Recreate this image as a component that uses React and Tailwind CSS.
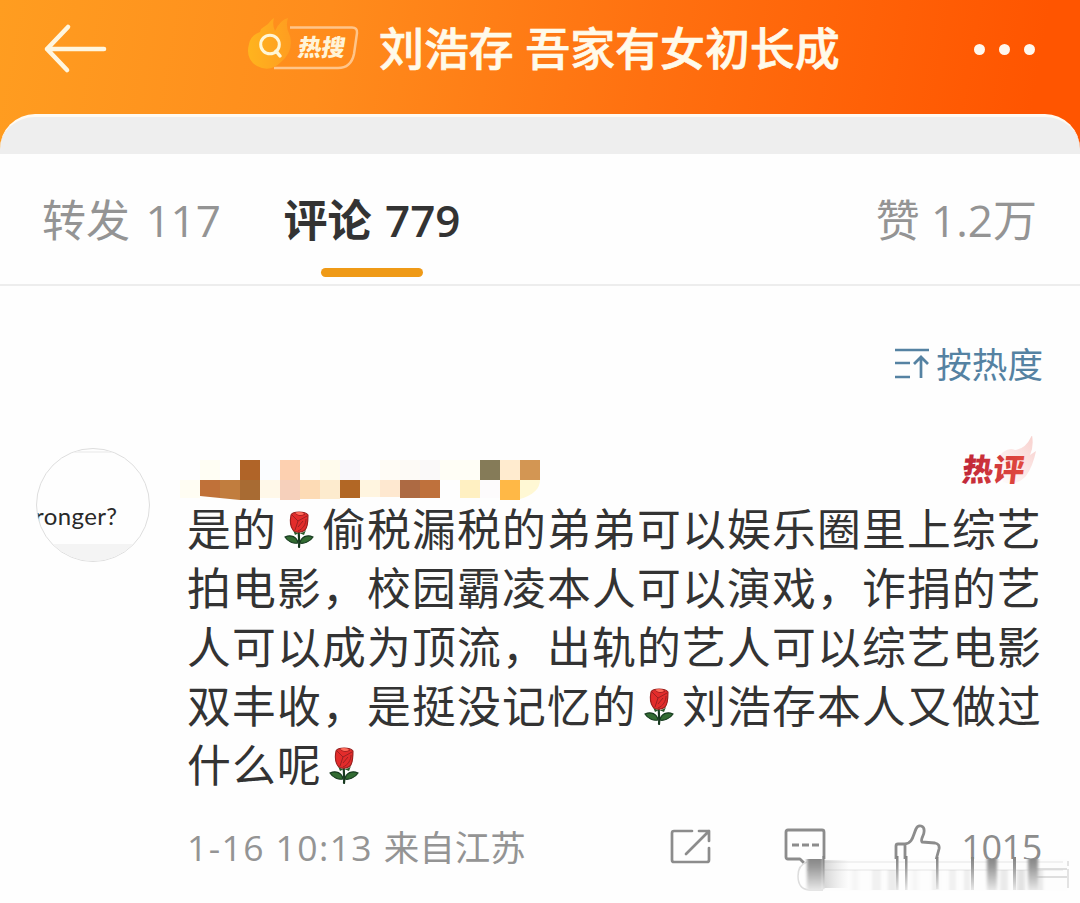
import React from 'react';

const commentLines = [
  '是的🌹偷税漏税的弟弟可以娱乐圈里上综艺',
  '拍电影，校园霸凌本人可以演戏，诈捐的艺',
  '人可以成为顶流，出轨的艺人可以综艺电影',
  '双丰收，是挺没记忆的🌹刘浩存本人又做过',
  '什么呢🌹',
];

// [x, y, width, height, colour] of every block in the hidden nickname
const mosaic = [
  [20, 0, 20, 20, '#fffef4'],
  [60, 0, 20, 20, '#b06428'],
  [80, 0, 20, 20, '#fbfdff'],
  [100, 0, 20, 20, '#fdd0b0'],
  [120, 0, 20, 20, '#fffdf9'],
  [140, 0, 20, 20, '#fffbed'],
  [160, 0, 20, 20, '#f9f7fa'],
  [200, 0, 20, 20, '#fffcf6'],
  [220, 0, 20, 20, '#fdfaf6'],
  [240, 0, 20, 20, '#faf9f9'],
  [260, 0, 40, 20, '#fffef6'],
  [300, 0, 20, 20, '#857b58'],
  [320, 0, 20, 20, '#ffebcf'],
  [340, 0, 20, 20, '#d39653'],
  [0, 20, 20, 18, '#fffdf3'],
  [60, 20, 20, 20, '#a86b33'],
  [80, 20, 20, 18, '#fff8e9'],
  [100, 20, 20, 20, '#f6d0bb'],
  [120, 20, 20, 19, '#fddbb5'],
  [140, 20, 20, 19, '#fdebce'],
  [160, 20, 20, 18, '#b26725'],
  [180, 20, 20, 17, '#fff5e0'],
  [200, 20, 20, 17, '#fee8d0'],
  [220, 20, 20, 18, '#ad6a43'],
  [240, 20, 20, 18, '#bf713c'],
  [280, 20, 20, 18, '#fff0c2'],
  [300, 20, 20, 18, '#fdfbfc'],
  [320, 20, 20, 20, '#ffb846'],
];

// [x, width, opacity] of the vertical streaks in the watermark
const streaks = [
  [55, 6, 0.05],
  [75, 9, 0.09],
  [91, 9, 0.12],
  [115, 6, 0.06],
  [135, 7, 0.09],
  [152, 7, 0.09],
  [167, 6, 0.11],
  [190, 9, 0.13],
  [203, 8, 0.14],
  [220, 8, 0.2],
  [238, 8, 0.15],
];

const Rose = () => (
  <svg className="inline-block w-[45px] h-[40px] -mt-[8px] align-middle" viewBox="0 0 45 40">
    <path d="M22 19C21 26 23 31 22 37" fill="none" stroke="#17391f" strokeWidth="2.2" strokeLinecap="round" />
    <path d="M21 33C17 34 11 32 8 27C14 24 20 27 21 33Z" fill="#326b32" stroke="#173b20" strokeWidth="1.2" />
    <path d="M23 33C26 34 33 32 36 27C30 24 24 27 23 33Z" fill="#326b32" stroke="#173b20" strokeWidth="1.2" />
    <path d="M16 20C19 24 26 24 29 20L27 25L22 23L18 25Z" fill="#285a2b" />
    <path d="M14 5C16 1 28 1 31 5C31 11 31 17 28 20C25 23 18 23 16 20C13 16 13 10 14 5Z" fill="#e32c2b" stroke="#96201f" strokeWidth="1.1" />
    <path d="M15 5L21 11L30 6M21 11L18 20M18 3C21 6 25 6 28 4M26 11L21 17M29 9C29 14 26 19 21 21" fill="none" stroke="#9c2022" strokeWidth="1" />
    <path d="M18 3C21 1 26 2 27 4C24 6 21 5 18 3Z" fill="#ff6a59" />
  </svg>
);

const HotSearchBadge = () => (
  <svg className="w-[112px] h-[54px] shrink-0" viewBox="0 0 112 54">
    <path d="M42 9.500H104Q109.500 9.500 109 15L106 36Q103 50 90 50H26" fill="none" stroke="#ffc58a" strokeWidth="2.500" />
    <path d="M13 11L20 6Q24 1 26 0Q24 7 27 13Q32 2 40 0Q37 9 42 18Q46 33 33 44Q22 55 9 48Q-3 41 1 26Q3 17 12 14Z" fill="url(#flame)" />
    <circle cx="22" cy="26.500" r="9.300" fill="none" stroke="#fff6d5" strokeWidth="3" />
    <path d="M28 33L32 38" stroke="#fff6d5" strokeWidth="3.500" strokeLinecap="round" />
    <text x="0" y="0" transform="translate(49 38) skewX(-9)" fontFamily="Noto Sans CJK SC, sans-serif" fontSize="23.500" fontWeight="900" fill="#fff4d8">热搜</text>
    <defs>
      <linearGradient id="flame" x1="0" y1="0" x2="1" y2="0">
        <stop offset="0" stopColor="#ffb41e" />
        <stop offset="1" stopColor="#ff9d20" />
      </linearGradient>
    </defs>
  </svg>
);

const HotCommentBadge = () => (
  <svg className="w-[80px] h-[58px]" viewBox="0 0 80 58">
    <path d="M36 24Q46 10 55 14Q66 13 72 -1Q74 11 70 19L76 15Q73 30 66 40Q56 51 43 46Z" fill="url(#glow)" />
    <text transform="translate(1 45) skewX(-7)" fontFamily="Noto Sans CJK SC, sans-serif" fontSize="31" fontWeight="900" fill="url(#red)">热评</text>
    <defs>
      <linearGradient id="glow" x1="0" y1="1" x2="1" y2="0">
        <stop offset="0" stopColor="#fff" />
        <stop offset="1" stopColor="#f8cfcc" />
      </linearGradient>
      <linearGradient id="red" x1="0" y1="0" x2="1" y2="0">
        <stop offset="0" stopColor="#bf2639" />
        <stop offset="1" stopColor="#e24a3e" />
      </linearGradient>
    </defs>
  </svg>
);

const Header = () => (
  <header className="h-[154px] flex flex-col justify-between bg-[linear-gradient(100deg,#ff9d20_0%,#ff8c1c_30%,#ff7010_60%,#ff5500_95%)]">
    <div className="h-[98px] flex items-center">
      <svg className="w-[64px] h-[52px] ml-[43px] shrink-0" viewBox="0 0 64 52">
        <path d="M25 4L4 26L24 47M4 26H61" fill="none" stroke="#fff6df" strokeWidth="4.6" strokeLinecap="round" strokeLinejoin="round" />
      </svg>
      <div className="ml-[141px] -mt-[8px] flex"><HotSearchBadge /></div>
      <h1 className="ml-[19px] w-[480px] text-[44.9px] leading-[60px] font-medium text-[#fffaea] whitespace-nowrap [-webkit-text-stroke:0.7px_#fffaea]">刘浩存 吾家有女初长成</h1>
      <div className="ml-[115px] flex gap-[14px]">
        <i className="size-[11px] rounded-full bg-[#fff7ee]" />
        <i className="size-[11px] rounded-full bg-[#fff7ee]" />
        <i className="size-[11px] rounded-full bg-[#fff7ee]" />
      </div>
    </div>
    <div className="h-[40px] rounded-t-[35px] border-t-[3px] border-[#fffaf2] bg-[#eee]" />
  </header>
);

const Tabs = () => (
  <nav className="h-[132px] flex items-start pt-[36px] pl-[42px] pr-[43px] border-b-2 border-[#ededed] text-[44px] leading-[60px] text-[#949494] whitespace-nowrap">
    <span className="w-[240px]">转发<span className="ml-[4px]"> 117</span></span>
    <div className="w-[180px] flex flex-col items-center">
      <span className="font-semibold text-[#333]">评论<span className="ml-[2px]"> 779</span></span>
      <i className="mt-[18px] h-[9px] w-[102px] rounded-full bg-[#ef9a17]" />
    </div>
    <span className="ml-auto">赞 1.2万</span>
  </nav>
);

const Watermark = () => (
  <svg className="absolute left-[797px] top-[856px] w-[275px] h-[38px]" viewBox="0 0 275 38">
    <defs>
      <linearGradient id="smear" gradientUnits="userSpaceOnUse" x1="0" y1="0" x2="0" y2="36">
        <stop offset="0" stopColor="#808080" />
        <stop offset="0.3" stopColor="#999" />
        <stop offset="1" stopColor="#eee" />
      </linearGradient>
      <linearGradient id="fade" x1="0" y1="0" x2="1" y2="0">
        <stop offset="0" stopColor="#888" stopOpacity="0.35" />
        <stop offset="1" stopColor="#aaa" stopOpacity="0" />
      </linearGradient>
      <filter id="soft" x="-50%" width="200%"><feGaussianBlur stdDeviation="1.4 0.5" /></filter>
    </defs>
    <path d="M12 6H28V3H270V35H8Z" fill="#fdfdfd" />
    <path d="M26 6H266M10 14H266" stroke="#f1f1f1" strokeWidth="2" />
    <path d="M10 6Q1 9 1 20Q1 33 12 34H26" fill="none" stroke="#ddd" strokeWidth="1.500" />
    <path d="M236 13H270M236 21H270M271 5V10M271 13V32" stroke="#d4d4d4" strokeWidth="1.300" />
    <rect x="26" y="4" width="26" height="28" fill="url(#fade)" />
    <g filter="url(#soft)">
      <rect x="10" y="3" width="16" height="31" fill="url(#smear)" />
      {streaks.map(([x, w, o]) => (
        <rect key={x} x={x} y="14" width={w} height="20" fill="#777" opacity={o} />
      ))}
      <rect x="190" y="3" width="10" height="31" fill="url(#smear)" />
      <rect x="231" y="3" width="10" height="31" fill="url(#smear)" />
    </g>
    <path d="M26.500 0V33" stroke="url(#smear)" strokeWidth="2" />
    <g fill="url(#smear)">
      <rect x="99" y="0" width="2.500" height="34" />
      <rect x="108" y="0" width="2.500" height="34" />
      <rect x="139" y="1" width="2.500" height="32" />
      <rect x="174" y="1" width="3" height="33" />
      <rect x="216" y="1" width="3" height="33" />
    </g>
  </svg>
);

const Actions = () => (
  <div className="flex items-start text-[#8c8c8c]">
    <svg className="w-[42px] h-[36px] mt-[11px]" viewBox="0 0 42 36" fill="none" stroke="currentColor" strokeWidth="2.700" strokeLinecap="round" strokeLinejoin="round">
      <path d="M22 2H4Q2 2 2 4V31Q2 33 4 33H37Q39 33 39 31V19M29 2H39V12M39 2L16 25" />
    </svg>
    <svg className="w-[42px] h-[38px] ml-[72px] mt-[10px]" viewBox="0 0 42 38" fill="none" stroke="currentColor" strokeWidth="2.800" strokeLinejoin="round">
      <path d="M20 35L16 31H4Q2 31 2 29V4Q2 2 4 2H38Q40 2 40 4V31" />
      <path d="M8 17H15M18 17H25M28 17H35" />
    </svg>
    <svg className="w-[48px] h-[36px] ml-[67px] mt-[6px]" viewBox="0 0 48 36" fill="none" stroke="currentColor" strokeWidth="2.800" strokeLinejoin="round">
      <path d="M3 43V22Q3 20 5 20H12V43M12 20C20 19 20 11 23 5C25 0 32 1 31 8C31 12 27 15 29 18L42 19Q47 20 46 25L43 36" />
    </svg>
    <span className="ml-[20px] mt-[2px] text-[36px] leading-[56px] tracking-[-0.4px]">1015</span>
  </div>
);

const Comment = () => (
  <article className="flex pl-[36px]">
    <div className="mt-[12px] size-[114px] shrink-0 rounded-full border-[1.5px] border-[#dedede] overflow-hidden flex flex-col justify-end">
      <div className="h-[2px] mx-[24px] mb-auto mt-[2px] bg-[#f3f3f3]" />
      <span className="-ml-[2px] font-[Lato,sans-serif] text-[24px] leading-[28px] tracking-[0.4px] text-[#292929]">ronger?</span>
      <div className="mt-[14px] h-[17px] bg-[#f4f4f4]" />
    </div>
    <div className="ml-[30px] mt-[24px] w-[360px] h-[42px]">
      <svg className="w-[360px] h-[42px]" viewBox="0 0 360 42">
        <g shapeRendering="crispEdges">
          {mosaic.map(([x, y, w, h, fill]) => (
            <rect key={x + '-' + y} x={x} y={y} width={w} height={h} fill={fill} />
          ))}
        </g>
        <path d="M20 20H40V38L20 36Z" fill="#c07139" />
        <path d="M40 20H60V40L40 38Z" fill="#c17d3e" />
        <path d="M340 20H360Q360 33 340 39Z" fill="#fff8d4" />
      </svg>
    </div>
    <div className="ml-auto mr-[40px]"><HotCommentBadge /></div>
  </article>
);

const App = () => (
  <div className="relative w-[1080px] h-[903px] overflow-hidden bg-[#fefefe] font-['Open_Sans','Noto_Sans_CJK_SC',sans-serif]">
    <Header />
    <Tabs />
    <div className="mt-[51px] pr-[37px] flex justify-end items-center text-[#5582a2]">
      <svg className="w-[36px] h-[34px] mr-[6px]" viewBox="0 0 36 34" fill="none" stroke="currentColor" strokeWidth="2.700">
        <path d="M1 3H35M1 16H16M1 30H16M27 31V10M20 17L27 10L34 17" />
      </svg>
      <span className="text-[35.6px] leading-[54px]">按热度</span>
    </div>
    <div className="h-[45px]" />
    <div className="h-[64px]"><Comment /></div>
    <div className="pl-[187px] text-[43.8px] leading-[59px] tracking-[1.2px] text-[#333] whitespace-nowrap">
      {commentLines.map((line) => (
        <p key={line} className="h-[59px]">
          {line.split('🌹').map((part, i) => (
            <React.Fragment key={i}>
              {i > 0 && <Rose />}
              {part}
            </React.Fragment>
          ))}
        </p>
      ))}
    </div>
    <footer className="mt-[23px] pl-[187px] pr-[38px] flex justify-between">
      <span className="text-[35.5px] leading-[58px] text-[#949494] whitespace-nowrap"><span className="tracking-[1.4px]">1-16 10:13 </span>来自江苏</span>
      <Actions />
    </footer>
    <Watermark />
  </div>
);

export default App;
